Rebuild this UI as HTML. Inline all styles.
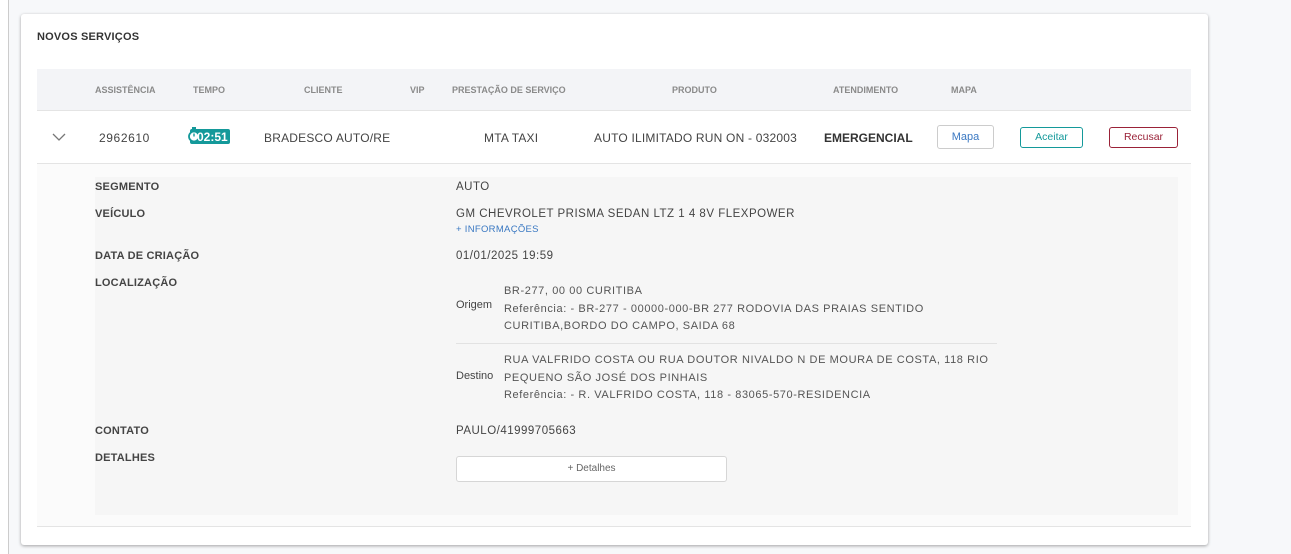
<!DOCTYPE html>
<html><head><meta charset="utf-8"><style>
*{margin:0;padding:0;box-sizing:border-box}
body{width:1291px;height:554px;background:#f7f8fa;font-family:"Liberation Sans",sans-serif;color:#444;position:relative;overflow:hidden}
.a{position:absolute;white-space:nowrap}
.side{position:absolute;left:0;top:0;width:9px;height:554px;background:#fff;border-right:1px solid #ccc}
.card{position:absolute;left:21px;top:14px;width:1187px;height:531px;background:#fff;border-radius:3px;box-shadow:0 1px 3px rgba(0,0,0,.35)}
.th{font-size:9px;font-weight:bold;color:#8a8a8a;top:85px}
.td{font-size:12px;color:#444;top:131px;letter-spacing:0.2px}
.lbl{font-size:11px;font-weight:bold;color:#444;left:95px;letter-spacing:0.2px}
.val{font-size:11.5px;color:#444;left:456px;letter-spacing:0.5px}
.btn{position:absolute;border:1px solid;border-radius:3px;font-size:11px;text-align:center;background:#fff}
.sm{font-size:11px;color:#555;line-height:17.5px;letter-spacing:0.6px}
</style></head><body>
<div class="side"></div>
<div class="card"></div>
<div class="a" style="left:37px;top:31px;font-size:11px;font-weight:bold;color:#333;letter-spacing:0.2px">NOVOS SERVIÇOS</div>
<div class="a" style="left:37px;top:69px;width:1154px;height:42px;background:#f3f4f7;border-bottom:1px solid #e4e4e4"></div>
<div class="a th" style="left:95px">ASSISTÊNCIA</div>
<div class="a th" style="left:193px">TEMPO</div>
<div class="a th" style="left:304px">CLIENTE</div>
<div class="a th" style="left:410px">VIP</div>
<div class="a th" style="left:452px">PRESTAÇÃO DE SERVIÇO</div>
<div class="a th" style="left:672px">PRODUTO</div>
<div class="a th" style="left:833px">ATENDIMENTO</div>
<div class="a th" style="left:951px">MAPA</div>
<div class="a" style="left:37px;top:163px;width:1154px;height:1px;background:#e4e4e4"></div>
<svg class="a" style="left:52px;top:133px" width="14" height="9"><path d="M1 1 L7 7 L13 1" fill="none" stroke="#777" stroke-width="1.3"/></svg>
<div class="a td" style="left:99px;letter-spacing:0.6px">2962610</div>
<div class="a" style="left:190px;top:129px;width:40px;height:15px;background:#14999a;border-radius:2px"></div>
<svg class="a" style="left:187px;top:125px" width="14" height="19"><circle cx="7" cy="11.5" r="5" fill="#fff" stroke="#14999a" stroke-width="1.8"/><rect x="5" y="2" width="4" height="2" fill="#14999a"/><path d="M7 11.5 V8.5" stroke="#14999a" stroke-width="1.4"/></svg>
<div class="a" style="left:197px;top:130px;font-size:12px;font-weight:bold;color:#fff">02:51</div>
<div class="a td" style="left:264px">BRADESCO AUTO/RE</div>
<div class="a td" style="left:484px">MTA TAXI</div>
<div class="a td" style="left:594px">AUTO ILIMITADO RUN ON - 032003</div>
<div class="a td" style="left:824px;font-weight:bold;color:#333;letter-spacing:0">EMERGENCIAL</div>
<div class="btn" style="left:937px;top:125px;width:57px;height:24px;border-color:#ccc;color:#3a78c2;line-height:22px">Mapa</div>
<div class="btn" style="left:1020px;top:127px;width:63px;height:21px;border-color:#14999a;color:#14999a;line-height:19px;font-size:10.5px">Aceitar</div>
<div class="btn" style="left:1109px;top:127px;width:69px;height:21px;border-color:#9a2238;color:#9a2238;line-height:19px;font-size:10.5px">Recusar</div>
<div class="a" style="left:37px;top:164px;width:1154px;height:363px;background:#fbfbfb;border-bottom:1px solid #e4e4e4"></div>
<div class="a" style="left:95px;top:177px;width:1083px;height:338px;background:#f6f6f6"></div>
<div class="a lbl" style="top:181px">SEGMENTO</div>
<div class="a lbl" style="top:208px">VEÍCULO</div>
<div class="a lbl" style="top:250px">DATA DE CRIAÇÃO</div>
<div class="a lbl" style="top:277px">LOCALIZAÇÃO</div>
<div class="a lbl" style="top:425px">CONTATO</div>
<div class="a lbl" style="top:452px">DETALHES</div>
<div class="a val" style="top:181px">AUTO</div>
<div class="a val" style="top:208px">GM CHEVROLET PRISMA SEDAN LTZ 1 4 8V FLEXPOWER</div>
<div class="a" style="left:456px;top:224px;font-size:9.5px;color:#3a78c2;letter-spacing:0.3px">+ INFORMAÇÕES</div>
<div class="a val" style="top:250px">01/01/2025 19:59</div>
<div class="a" style="left:456px;top:299px;font-size:11px;color:#444">Origem</div>
<div class="a sm" style="left:504px;top:283px">BR-277, 00 00 CURITIBA<br>Referência: - BR-277 - 00000-000-BR 277 RODOVIA DAS PRAIAS SENTIDO<br>CURITIBA,BORDO DO CAMPO, SAIDA 68</div>
<div class="a" style="left:456px;top:343px;width:541px;height:1px;background:#e2e2e2"></div>
<div class="a" style="left:456px;top:370px;font-size:11px;color:#444">Destino</div>
<div class="a sm" style="left:504px;top:352px">RUA VALFRIDO COSTA OU RUA DOUTOR NIVALDO N DE MOURA DE COSTA, 118 RIO<br>PEQUENO SÃO JOSÉ DOS PINHAIS<br>Referência: - R. VALFRIDO COSTA, 118 - 83065-570-RESIDENCIA</div>
<div class="a val" style="top:425px">PAULO/41999705663</div>
<div class="btn" style="left:456px;top:456px;width:271px;height:26px;border-color:#d6d6d6;color:#666;line-height:24px;font-size:10px">+ Detalhes</div>
</body></html>
